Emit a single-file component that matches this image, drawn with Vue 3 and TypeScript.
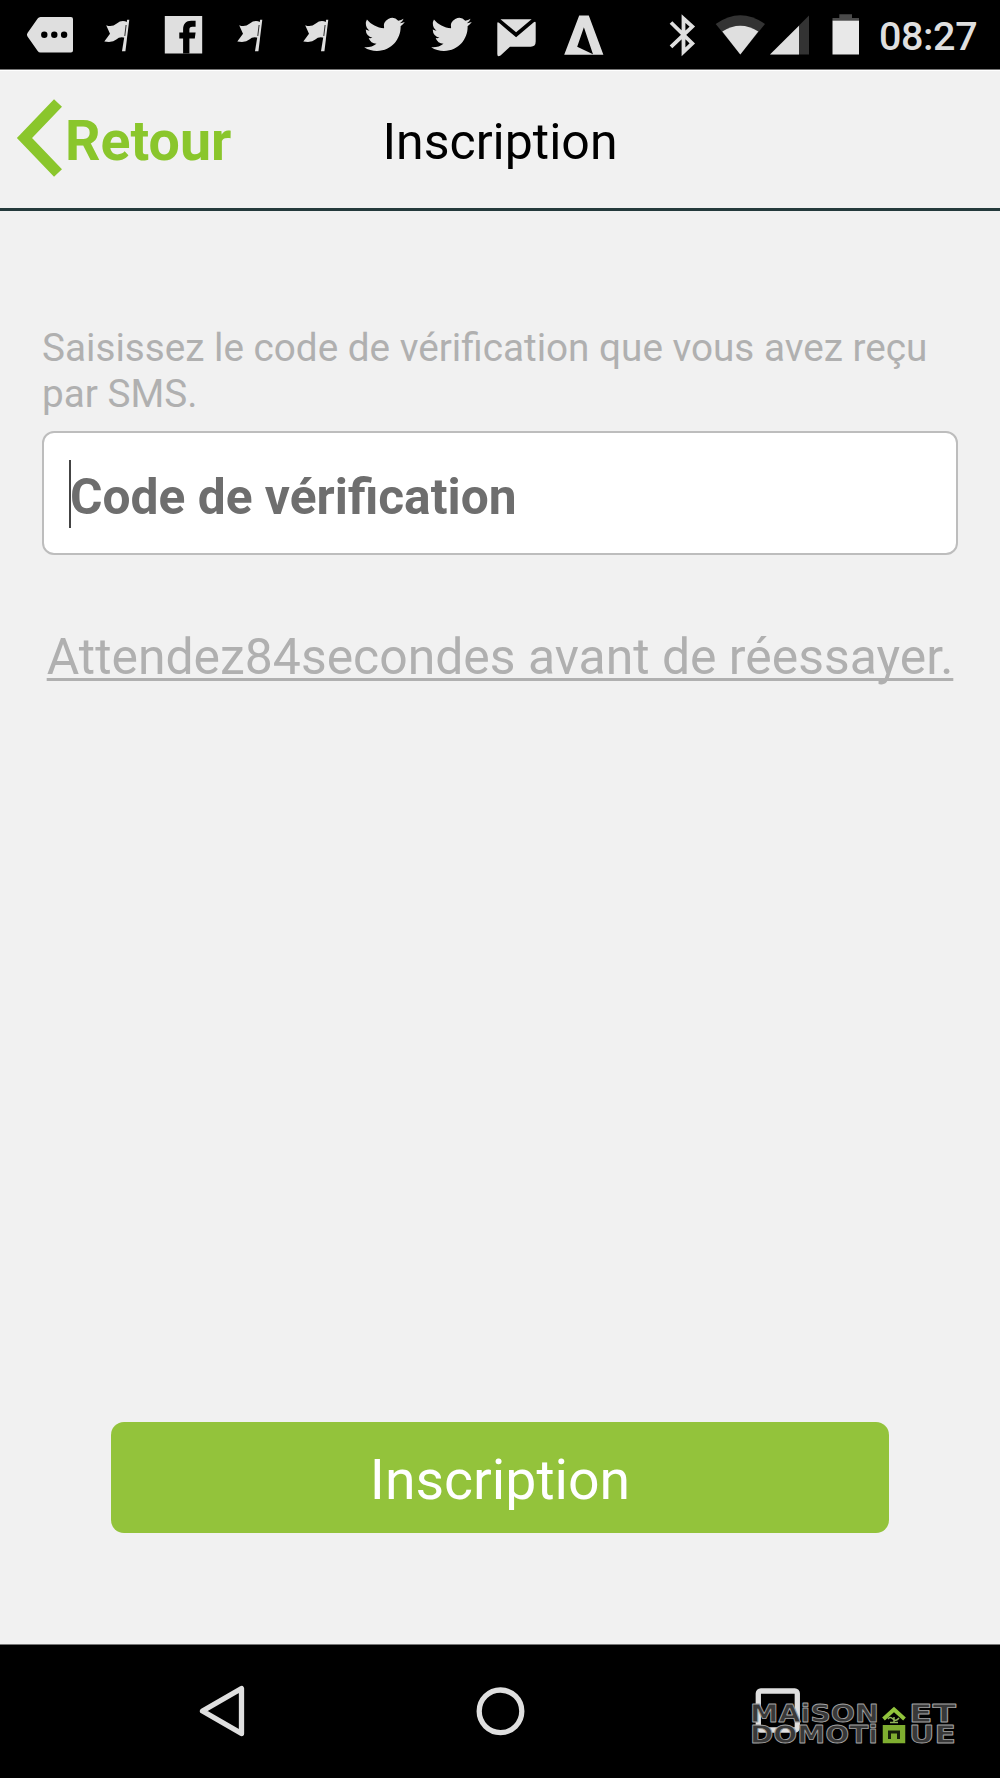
<script setup lang="ts">
import { ref } from 'vue'

type Glyph = 'tag' | 'flag' | 'facebook' | 'twitter' | 'mail' | 'letter'

const notifications: Glyph[] = ['tag', 'flag', 'facebook', 'flag', 'flag', 'twitter', 'twitter', 'mail', 'letter']
const code = ref('')
const seconds = ref(84)
</script>

<template>
  <div class="screen">
    <header class="status">
      <div class="notifications">
        <svg v-for="(glyph, i) in notifications" :key="i" class="cell" viewBox="0 0 66.6 70">
          <template v-if="glyph === 'tag'">
            <path d="M23.5 17H54q2 0 2 2V50.5q0 2-2 2H23.5q-1.800 0-2.800-1.500L10.500 36.500q-1.200-1.800 0-3.500L20.700 18.500Q21.700 17 23.500 17Z" />
            <g class="ink"><circle cx="27.300" cy="34.700" r="3.200" /><circle cx="37.300" cy="34.700" r="3.200" /><circle cx="47.100" cy="34.700" r="3.200" /></g>
          </template>
          <g v-else-if="glyph === 'flag'" transform="translate(.8 0)">
            <path d="M21.400 25.200Q27 27.500 32 23.500T42.500 22.200L40.500 37.800Q35 36 31.500 39.500T19.500 41.500L25.200 33.800Z" />
            <path d="M42.300 19.800h2.200L40.600 51.200h-3.400Z" />
            <path class="gap" d="M41.300 25L40 36" />
          </g>
          <template v-else-if="glyph === 'facebook'">
            <path d="M14.800 16H52.200V53.500H14.800Z" />
            <path class="ink" d="M33.100 53.500V38.500H29.300V32.600H33.100V29.500C33.100 23.500 36 20.700 41.200 20.700H45.600V26.800H42.600C40 26.800 39.400 28 39.400 29.800V32.600H45.600L44.800 38.500H39.400V53.500Z" />
          </template>
          <path
            v-else-if="glyph === 'twitter'"
            transform="translate(14.200 14.200) scale(1.690)"
            d="M23.953 4.570a10 10 0 0 1-2.825.775 4.958 4.958 0 0 0 2.163-2.723c-.951.555-2.005.959-3.127 1.184a4.920 4.920 0 0 0-8.384 4.482C7.690 8.095 4.067 6.130 1.640 3.162a4.822 4.822 0 0 0-.666 2.475c0 1.710.870 3.213 2.188 4.096a4.904 4.904 0 0 1-2.228-.616v.060a4.923 4.923 0 0 0 3.946 4.827 4.996 4.996 0 0 1-2.212.085 4.936 4.936 0 0 0 4.604 3.417 9.867 9.867 0 0 1-6.102 2.105c-.390 0-.779-.023-1.170-.067a13.995 13.995 0 0 0 7.557 2.209c9.053 0 13.998-7.496 13.998-13.985 0-.210 0-.420-.015-.630A9.935 9.935 0 0 0 24 4.590z"
          />
          <template v-else-if="glyph === 'mail'">
            <path d="M17.500 19.200H48.600L33.100 32.300Z" />
            <path d="M14.300 23.500Q14.300 21.500 16 22.800L33.100 37.300 50.500 22.500Q52.700 21 52.700 23V41.500Q52.700 46.700 47.700 46.700H27L17.500 55.500Q14.300 57.500 14.300 54Z" />
          </template>
          <path v-else fill-rule="evenodd" d="M29.200 15.500H38.800L53.400 54.700H14.200ZM33.900 27.300L27.200 46.800 43 54.200Z" />
        </svg>
      </div>
      <svg class="system" viewBox="664 0 210 70">
        <path class="bluetooth" d="M671 22.500L692.300 43.400 683.500 51.800V18.600L692.300 26.600 671 46.800" />
        <path class="dim" d="M715.700 24Q740.300 6.500 765 24L740.300 54.500Z" />
        <path d="M722.300 31.500Q740.300 20 758.300 31.500L740.300 54.500Z" />
        <path class="dim" d="M770 54.500H809V15.500Z" />
        <path d="M770 54.500H799V25.700Z" />
        <path class="cap" d="M839.300 14.300H852V18H859V21H832.500V18H839.300Z" />
        <path class="charge" d="M832.500 20.700H859V54.500H832.500Z" />
      </svg>
      <time class="clock">08:27</time>
    </header>

    <nav class="bar">
      <a class="back">
        <svg class="chevron" viewBox="0 0 50 84"><path d="M42 7L8.500 42 42 77" /></svg>
        <span>Retour</span>
      </a>
      <h1>Inscription</h1>
    </nav>

    <main>
      <p class="hint">Saisissez le code de vérification que vous avez reçu par SMS.</p>
      <label class="field">
        <span class="caret"></span>
        <input v-model="code" placeholder="Code de vérification" />
      </label>
      <p class="retry"><span>Attendez{{ seconds }}secondes avant de réessayer.</span></p>
      <button class="submit">Inscription</button>
    </main>

    <footer class="keys">
      <svg viewBox="0 0 54 60"><path d="M6.500 29L45.500 6.500V51.500Z" /></svg>
      <svg viewBox="0 0 54 60"><circle cx="26.500" cy="29.300" r="21.300" /></svg>
      <svg viewBox="0 0 54 60"><rect x="7.300" y="9" width="39" height="39" rx="2.500" /></svg>
      <svg class="brand" viewBox="748 1700 212 48">
        <g class="word">
          <text x="750" y="1721.500" textLength="129" lengthAdjust="spacingAndGlyphs">MAiSON</text>
          <text x="909" y="1721.500" textLength="47" lengthAdjust="spacingAndGlyphs">ET</text>
          <text x="750" y="1743" textLength="128" lengthAdjust="spacingAndGlyphs">DOMOTi</text>
          <text x="909" y="1743" textLength="47" lengthAdjust="spacingAndGlyphs">UE</text>
        </g>
        <path class="roof" d="M883.500 1719L894 1709.500 904.500 1719" />
        <path class="tree" d="M888 1719q2-3 5 0t6-1M890 1722.500h8M894 1717v6" />
        <path class="house" d="M884.500 1726.700H903.500V1741.500H884.500Z" />
        <path class="door" d="M889.500 1739V1732H898.500V1739" />
      </svg>
    </footer>
  </div>
</template>

<style>
body {
  margin: 0;
  background: #f1f1f1;
}
</style>

<style scoped>
.screen {
  width: 1000px;
  height: 1778px;
  display: flex;
  flex-direction: column;
  background: #f1f1f1;
  font-family: Roboto, sans-serif;
  overflow: hidden;
}
.status {
  box-sizing: border-box;
  height: 70px;
  flex: none;
  display: flex;
  background: #000;
  border-bottom: 1px solid #777;
  padding-left: 17px;
}
.notifications {
  display: flex;
  width: 647px;
}
.cell {
  flex: none;
  width: 66.6px;
  height: 70px;
}
.status svg {
  fill: #dfdfdf;
}
.status .ink {
  fill: #000;
}
.gap {
  stroke: #000;
  stroke-width: 0.8;
}
.system {
  flex: none;
  width: 210px;
  height: 70px;
}
.status .bluetooth {
  fill: none;
  stroke: #dfdfdf;
  stroke-width: 3.8;
}
.dim {
  fill: #333;
}
.cap {
  fill: #4a4a4a;
}
.charge {
  fill: #e8e8e8;
}
.clock {
  margin-left: 5px;
  color: #dfdfdf;
  font-size: 39.5px;
  font-weight: 500;
  letter-spacing: -0.4px;
  line-height: 73px;
  white-space: nowrap;
}
.bar {
  box-sizing: border-box;
  height: 141px;
  flex: none;
  display: grid;
  grid-template-columns: 1fr auto 1fr;
  align-items: center;
  border-top: 1px solid #fff;
  border-bottom: 3px solid #243a3c;
}
.back {
  display: flex;
  align-items: center;
  color: #8ac62c;
  font-size: 55.5px;
  font-weight: 700;
  line-height: 64px;
}
.back span {
  padding-top: 4px;
}
.chevron {
  width: 50px;
  height: 84px;
  margin: 0 0 3px 16px;
  fill: none;
  stroke: #8ac62c;
  stroke-width: 11;
}
.chevron + span {
  margin-left: -1px;
}
h1 {
  margin: 0;
  padding-top: 4px;
  color: #000;
  font-size: 50px;
  font-weight: 400;
  line-height: 60px;
}
main {
  flex: 1;
  display: flex;
  flex-direction: column;
  padding: 114px 42px 0;
}
.hint {
  margin: 0;
  color: #b0b0b0;
  font-size: 38.7px;
  line-height: 46px;
}
.field {
  box-sizing: border-box;
  height: 124px;
  margin-top: 14px;
  display: flex;
  align-items: center;
  padding-left: 25px;
  background: #fff;
  border: 2px solid #bdbdbd;
  border-radius: 12px;
}
.caret {
  width: 2px;
  height: 68px;
  margin: 2px -1px 0 0;
  background: #444;
}
input {
  flex: 1;
  height: 80px;
  padding: 8px 0 0;
  border: 0;
  outline: 0;
  background: transparent;
  font: 700 49.7px Roboto, sans-serif;
}
input::placeholder {
  color: #6e6e6e;
  opacity: 1;
}
.retry {
  margin: 70px -20px 0;
  text-align: center;
  color: #b0b0b0;
  font-size: 49.9px;
  line-height: 64px;
  white-space: nowrap;
}
.retry span {
  text-decoration: underline;
  text-decoration-thickness: 3px;
  text-decoration-skip-ink: none;
  text-underline-offset: 4px;
}
.submit {
  width: 778px;
  height: 111px;
  margin: auto auto 111px;
  padding: 5px 0 0;
  border: 0;
  border-radius: 13px;
  background: #93c33b;
  color: #fff;
  font: 400 55.400px Roboto, sans-serif;
}
.keys {
  box-sizing: border-box;
  position: relative;
  height: 134px;
  flex: none;
  display: flex;
  justify-content: space-between;
  align-items: center;
  padding: 0 195px 0 196px;
  background: #000;
  border-top: 1px solid #777;
}
.keys svg {
  width: 54px;
  height: 60px;
  fill: none;
  stroke: #dfdfdf;
  stroke-width: 5.3;
  stroke-linejoin: round;
}
.keys .brand {
  position: absolute;
  left: 748px;
  top: 55px;
  width: 212px;
  height: 48px;
}
.word {
  font: 700 25px 'DejaVu Sans', sans-serif;
  fill: #383838;
  stroke: #a2a2a2;
  stroke-width: 0.8;
}
.keys .roof {
  stroke: #91c43c;
  stroke-width: 4;
  stroke-linejoin: miter;
}
.keys .tree {
  stroke: #91b65a;
  stroke-width: 1.5;
}
.keys .house {
  fill: #7fae30;
  stroke: #7fae30;
  stroke-width: 3.5;
  stroke-linejoin: miter;
}
.keys .door {
  stroke: #16200a;
  stroke-width: 3;
  stroke-linejoin: miter;
}
</style>
